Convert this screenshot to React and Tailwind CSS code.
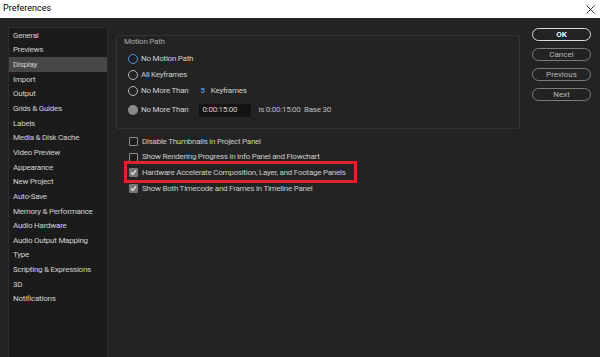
import React from "react";

const items = [
  "General","Previews","Display","Import","Output","Grids & Guides","Labels","Media & Disk Cache","Video Preview","Appearance","New Project","Auto-Save","Memory & Performance","Audio Hardware","Audio Output Mapping","Type","Scripting & Expressions","3D","Notifications",
];

function Radio({ kind, label, children }) {
  let circle;
  if (kind === "focus") circle = <span className="w-[10px] h-[10px] rounded-full border-[1.5px] border-[#4d92dc] bg-[#1e1e1e]" />;
  else if (kind === "filled") circle = <span className="w-[10px] h-[10px] rounded-full bg-[#8a8a8a]" />;
  else circle = <span className="w-[10px] h-[10px] rounded-full border-[1.5px] border-[#b4b4b4]" />;
  return (
    <div className="flex items-center gap-[3px] h-[16px]">
      {circle}
      <span className="text-[#cfcfcf]">{label}</span>
      {children}
    </div>
  );
}

function Check({ checked, label }) {
  return (
    <div className="flex items-center gap-[4px] h-[15.6px]">
      {checked ? (
        <span className="w-[9px] h-[9px] rounded-[1px] bg-[#777] flex items-center justify-center">
          <svg width="7" height="7" viewBox="0 0 7 7"><path d="M1 3.6 L2.8 5.4 L6 1.4" stroke="#eee" strokeWidth="1.2" fill="none" /></svg>
        </span>
      ) : (
        <span className="w-[9px] h-[9px] rounded-[1px] border border-[#8d8d8d] bg-[#1e1e1e]" />
      )}
      <span className="text-[#cacaca]">{label}</span>
    </div>
  );
}

export default function App() {
  return (
    <div className="w-[600px] h-[357px] bg-[#232323] flex flex-col overflow-hidden text-[8px] tracking-[-0.25px]" style={{ fontFamily: "Roboto, 'Liberation Sans', sans-serif" }}>
      <div className="h-[18px] bg-white flex items-center justify-between pl-[3px] pr-[5px] shrink-0 tracking-normal">
        <span className="text-black text-[9px]">Preferences</span>
        <svg width="9" height="9" viewBox="0 0 9 9"><path d="M0.5 0.5 L8.5 8.5 M8.5 0.5 L0.5 8.5" stroke="#222" strokeWidth="0.9" /></svg>
      </div>
      <div className="flex flex-1 relative">
        <div className="ml-[8px] mt-[9px] w-[100px] bg-[#1b1b1b] border border-[#2e2e2e] border-b-0 flex flex-col">
          {items.map((t) => (
            <div key={t} className={`h-[14.65px] flex items-center pl-[4px] pt-[1px] text-[#d0d0d0] ${t === "Display" ? "bg-[#474747]" : ""}`}>{t}</div>
          ))}
        </div>
        <div className="ml-[8px] mt-[17px] w-[404px] flex flex-col">
          <div className="h-[94px] border border-[#323232] rounded-[2px] pl-[11px] pt-[1px] flex flex-col">
            <div className="text-[#a9a9a9] h-[10px] leading-[10px] -ml-[4px]">Motion Path</div>
            <div className="mt-[4px] flex flex-col">
              <Radio kind="focus" label="No Motion Path" />
              <Radio label="All Keyframes" />
              <Radio label="No More Than">
                <span className="ml-[9px] text-[#4d92dc] font-bold">5</span>
                <span className="ml-[3px] text-[#cfcfcf]">Keyframes</span>
              </Radio>
              <div className="h-[3px]" />
              <Radio kind="filled" label="No More Than">
                <span className="ml-[8px] w-[52px] h-[13px] bg-[#141414] text-[#d0d0d0] flex items-center pl-[3px]">0:00:15:00</span>
                <span className="ml-[4px] text-[#bdbdbd]">is 0:00:15:00&nbsp; Base 30</span>
              </Radio>
            </div>
          </div>
          <div className="mt-[5px] pl-[13px] flex flex-col">
            <Check label="Disable Thumbnails in Project Panel" />
            <Check label="Show Rendering Progress in Info Panel and Flowchart" />
            <Check checked label="Hardware Accelerate Composition, Layer, and Footage Panels" />
            <Check checked label="Show Both Timecode and Frames in Timeline Panel" />
          </div>
        </div>
        <div className="ml-[12px] mt-[10px] w-[59px] flex flex-col gap-[7px] tracking-normal">
          <div className="h-[13px] rounded-full border border-[#dcdcdc] flex items-center justify-center text-white font-semibold">OK</div>
          <div className="h-[13px] rounded-full border border-[#7c7c7c] flex items-center justify-center text-[#b8b8b8]">Cancel</div>
          <div className="h-[13px] rounded-full border border-[#7c7c7c] flex items-center justify-center text-[#b8b8b8]">Previous</div>
          <div className="h-[13px] rounded-full border border-[#7c7c7c] flex items-center justify-center text-[#b8b8b8]">Next</div>
        </div>
        <div className="absolute left-[124px] top-[143px] w-[233px] h-[22px] border-[3px] border-[#e1232c]" />
      </div>
    </div>
  );
}
